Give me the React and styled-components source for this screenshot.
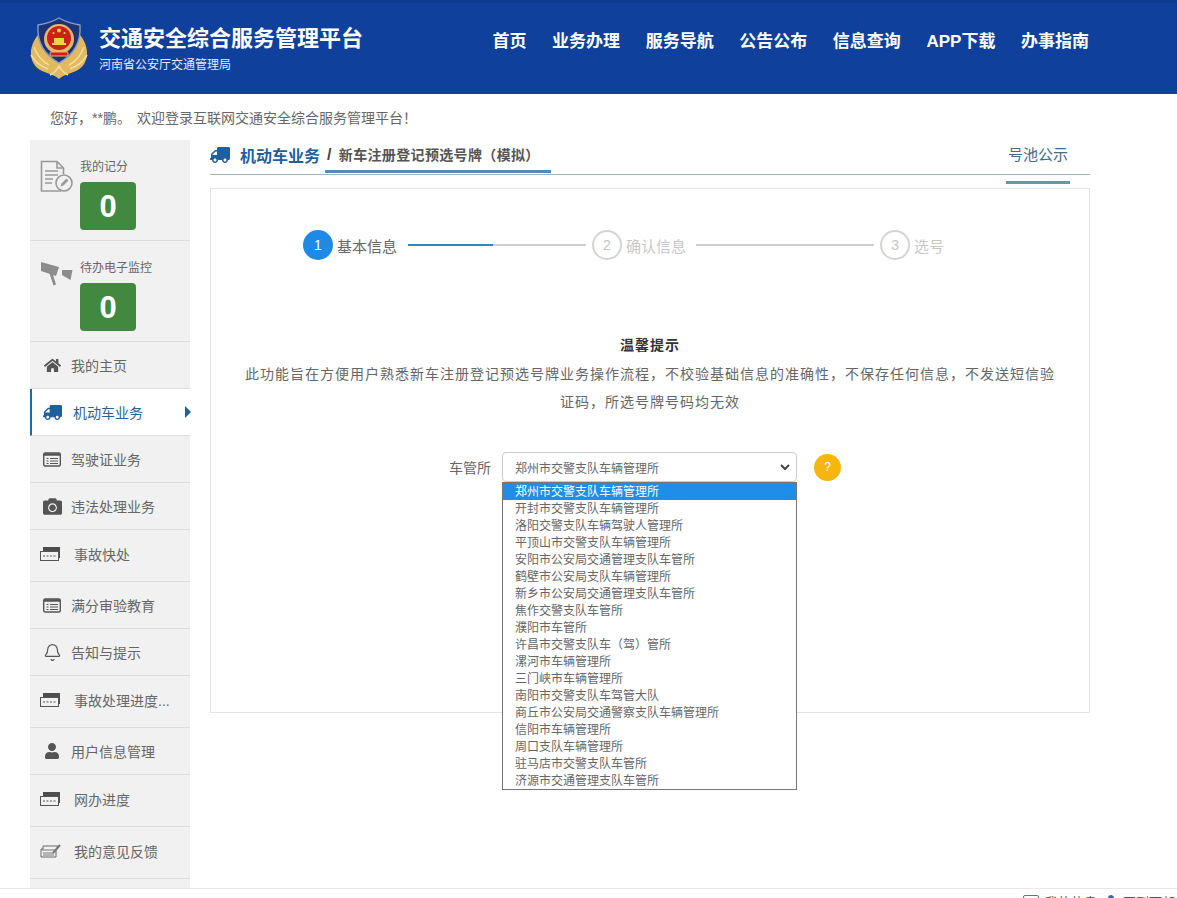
import React from 'react'
import styled, { createGlobalStyle } from 'styled-components'
import { FaTruck, FaHome, FaCamera, FaUser } from 'react-icons/fa'
import { Bell } from 'lucide-react'

const GlobalStyle = createGlobalStyle`
  html, body {
    margin: 0;
    padding: 0;
    height: 100%;
    overflow: hidden;
    background: #fff;
    font-family: "Liberation Sans", "Noto Sans CJK SC", sans-serif;
    color: #666;
  }
`
const Header = styled.header`
  height: 91px;
  background: #0e409c;
  border-top: 3px solid #0b3a8f;
`
const HeaderInner = styled.div`
  width: 1090px;
  height: 100%;
  padding-left: 30px;
  box-sizing: border-box;
  display: flex;
  align-items: center;
  justify-content: space-between;
`
const Brand = styled.div`
  display: flex;
  align-items: center;
  gap: 11px;
  margin-top: -2px;
`
const BrandText = styled.div`
  display: flex;
  flex-direction: column;
  gap: 3px;
  padding-top: 2px;
  color: #fff;
`
const BrandTitle = styled.div`
  font-size: 22px;
  line-height: 30px;
  font-weight: 700;
`
const BrandSub = styled.div`
  font-size: 12px;
  line-height: 16px;
  color: #e4ecf8;
`
const Nav = styled.nav`
  display: flex;
  gap: 25.6px;
  margin: -18px 1px 0 0;
`
const NavLink = styled.a`
  color: #fff;
  font-size: 17px;
  font-weight: 700;
`
const Welcome = styled.div`
  height: 46px;
  padding-left: 50px;
  display: flex;
  align-items: center;
  gap: 6px;
  font-size: 14px;
  color: #666;
`
const Layout = styled.div`
  display: flex;
  gap: 20px;
  padding-left: 30px;
  width: 1090px;
  box-sizing: border-box;
`
const Sidebar = styled.aside`
  width: 160px;
  flex: none;
  height: 760px;
  background: #f1f1f1;
`
const ScoreItem = styled.div`
  height: 100px;
  border-bottom: 1px solid #ddd;
  display: flex;
  padding-left: 10px;
`
const ScoreIcon = styled.div`
  width: 40px;
  padding-top: ${p => p.$top}px;
`
const ScoreBody = styled.div`
  padding-top: 18px;
  font-size: 12px;
  line-height: 18px;
  color: #666;
`
const ScoreBox = styled.div`
  width: 56px;
  height: 48px;
  box-sizing: border-box;
  padding-top: 2px;
  margin-top: 6px;
  border-radius: 4px;
  background: #43883f;
  color: #fff;
  font-size: 31px;
  font-weight: 700;
  display: flex;
  align-items: center;
  justify-content: center;
`
const MenuItem = styled.div`
  box-sizing: border-box;
  padding-bottom: ${p => (p.$tall ? 4 : 0)}px;
  height: ${p => (p.$tall ? 52 : 47)}px;
  border-bottom: 1px solid #ddd;
  display: flex;
  align-items: center;
  padding-left: ${p => (p.$active ? 8 : 10)}px;
  font-size: 14px;
  position: relative;
  background: ${p => (p.$active ? '#fff' : 'transparent')};
  border-left: ${p => (p.$active ? '2px solid #1f6aa5' : 'none')};
  color: ${p => (p.$active ? '#2b6390' : '#666')};
`
const MenuIcon = styled.span`
  width: 24px;
  margin-right: ${p => p.$gap}px;
  display: flex;
  justify-content: ${p => (p.$left ? 'flex-start' : 'center')};
  color: ${p => (p.$active ? '#1f5f9e' : '#555')};
  font-size: ${p => p.$size}px;
`
const ActiveArrow = styled.span`
  position: absolute;
  right: -1px;
  top: 17px;
  border-left: 6px solid #1f5f9e;
  border-top: 6px solid transparent;
  border-bottom: 6px solid transparent;
`
const Main = styled.main`
  width: 880px;
  flex: none;
`
const TitleBar = styled.div`
  height: 34px;
  border-bottom: 1px solid #9db5c0;
  display: flex;
  justify-content: space-between;
`
const Crumbs = styled.div`
  display: flex;
  align-items: flex-start;
`
const CrumbRoot = styled.div`
  display: flex;
  align-items: center;
  gap: 10px;
  height: 30px;
  color: #1f5f9e;
  font-size: 16px;
  font-weight: 700;
  margin-right: 5px;
  svg { transform: scaleX(-1); }
`
const CrumbCurrent = styled.div`
  height: 33px;
  width: 226px;
  box-sizing: border-box;
  padding-bottom: 3px;
  border-bottom: 3px solid #5b86b5;
  display: flex;
  align-items: center;
  font-size: 14px;
  letter-spacing: 0.35px;
  font-weight: 700;
  color: #555;
  white-space: nowrap;
`
const CrumbSlash = styled.span`
  font-size: 16px;
  padding-top: 3px;
  margin: 0 7px 0 2px;
  color: #444;
`
const PoolTab = styled.div`
  position: relative;
  width: 64px;
  margin-right: 20px;
  height: 30px;
  line-height: 30px;
  text-align: center;
  font-size: 15px;
  color: #4a6b85;
  &::after {
    content: '';
    position: absolute;
    left: 0;
    right: 0;
    top: 41px;
    height: 3px;
    background: #6b93a8;
  }
`
const Card = styled.section`
  margin-top: 13px;
  height: 523px;
  border: 1px solid #e4e4e4;
  position: relative;
`
const Steps = styled.div`
  display: flex;
  align-items: center;
  padding: 41px 0 0 92px;
`
const StepCircle = styled.div`
  width: 30px;
  height: 30px;
  box-sizing: border-box;
  border-radius: 50%;
  flex: none;
  display: flex;
  align-items: center;
  justify-content: center;
  font-size: 14px;
  background: ${p => (p.$on ? '#1e8ae6' : '#fff')};
  border: ${p => (p.$on ? 'none' : '2px solid #d4d4d4')};
  color: ${p => (p.$on ? '#fff' : '#c4c4c4')};
`
const StepLabel = styled.div`
  font-size: 15px;
  margin-left: 4px;
  white-space: nowrap;
  color: ${p => (p.$on ? '#666' : '#c8c8c8')};
`
const StepLine = styled.div`
  width: 178px;
  height: 2px;
  margin: 0 6px 0 ${p => p.$left}px;
  background: #cfcfcf;
  display: flex;
`
const StepProgress = styled.div`
  height: 100%;
  background: #2b86c5;
`
const Notice = styled.div`
  margin-top: 71px;
  padding: 0 34px;
  text-align: center;
  font-size: 14px;
  line-height: 28px;
  letter-spacing: 1px;
  color: #666;
`
const NoticeTitle = styled.div`
  font-weight: 700;
  color: #333;
  margin-bottom: 1px;
`
const FormRow = styled.div`
  display: flex;
  align-items: center;
  margin-top: 36px;
  padding-left: 238px;
`
const FieldLabel = styled.label`
  font-size: 14px;
  width: 43px;
  margin-right: 10px;
  color: #666;
  white-space: nowrap;
`
const SelectWrap = styled.div`
  position: relative;
  width: 295px;
  height: 30px;
`
const SelectBox = styled.div`
  height: 100%;
  box-sizing: border-box;
  border: 1px solid #ccc;
  border-radius: 4px;
  padding: 0 6px 0 12px;
  display: flex;
  align-items: center;
  justify-content: space-between;
  font-size: 12px;
  color: #666;
`
const Listbox = styled.ul`
  position: absolute;
  left: 0;
  top: 30px;
  width: 100%;
  box-sizing: border-box;
  margin: 0;
  padding: 0;
  list-style: none;
  border: 1px solid #767676;
  background: #fff;
  z-index: 2;
`
const Option = styled.li`
  height: 17px;
  line-height: 19px;
  padding-left: 12px;
  font-size: 12px;
  white-space: nowrap;
  background: ${p => (p.$selected ? '#1e8ee8' : '#fff')};
  color: ${p => (p.$selected ? '#fff' : '#666')};
`
const HelpDot = styled.div`
  width: 27px;
  height: 27px;
  margin-left: 17px;
  border-radius: 50%;
  background: #f6b60e;
  color: #fff;
  font-size: 12px;
  display: flex;
  align-items: center;
  justify-content: center;
`
const Footer = styled.footer`
  position: fixed;
  left: 0;
  right: 0;
  bottom: 0;
  height: 9px;
  border-top: 1px solid #e8e8e8;
  background: #fff;
  overflow: hidden;
  z-index: 3;
  display: flex;
  justify-content: flex-end;
`
const FooterLink = styled.div`
  display: flex;
  align-items: flex-start;
  gap: 6px;
  padding-top: 6px;
  font-size: 13px;
  line-height: 15px;
  color: #555;
  white-space: nowrap;
  width: ${p => p.$width}px;
`
const FooterBoxIcon = styled.span`
  width: 14px;
  height: 12px;
  border: 1px solid #3b8a6a;
  border-radius: 2px;
  flex: none;
`

const Emblem = () => (
  <svg width="58" height="62" viewBox="0 0 58 62">
    <path d="M8 18C-2 30-2 47 12 54c7 3 13 4 17 8 4-4 10-5 17-8 14-7 14-24 4-36z" fill="#e2b95f" />
    <path d="M4 30c3 8 7 14 15 18M1 38c4 7 9 11 17 14M54 30c-3 8-7 14-15 18M57 38c-4 7-9 11-17 14M20 58c4-2 7-5 9-9 2 4 5 7 9 9" stroke="#f5dd9e" strokeWidth="1.6" fill="none" />
    <path d="M29 1C22 5 15 7 8 8 7 22 11 36 29 46 47 36 51 22 50 8 43 7 36 5 29 1z" fill="#1c3477" stroke="#8a9cc2" strokeWidth="1.4" />
    <circle cx="29" cy="22" r="15" fill="#e8b868" />
    <circle cx="29" cy="21" r="12" fill="#cf1f1c" />
    <circle cx="29" cy="13.5" r="2" fill="#f6d04d" />
    <circle cx="23.5" cy="16" r="1.1" fill="#f6d04d" />
    <circle cx="34.5" cy="16" r="1.1" fill="#f6d04d" />
    <path d="M22 26h14v2H22zM24 21h10v5H24z" fill="#f6d04d" />
    <rect x="20" y="35" width="18" height="4" rx="1" fill="#cf1f1c" stroke="#e8b868" />
  </svg>
)

const ScoreDocIcon = () => (
  <svg width="33" height="33" viewBox="0 0 33 33" fill="none" stroke="#999" strokeWidth="1.6">
    <path d="M21 31H1.5V1.5H17L23.5 8V14" />
    <path d="M17 1.5V8H23.5" />
    <path d="M5 11h13M5 15h13M5 19h8M5 23h7" />
    <circle cx="24" cy="23" r="8" fill="#f1f1f1" />
    <path d="M20.5 26.5l1-3 5-5 2 2-5 5z" fill="#999" stroke="none" />
  </svg>
)

const CameraIcon = () => (
  <svg width="33" height="28" viewBox="0 0 33 28" fill="#8c8c8c">
    <path d="M1 4l18 5-3 9-15-5z" />
    <path d="M8 11l3-1 5 16.5-2.5 1z" />
    <path d="M22 12h10.5l-2 10-8.5-5z" />
  </svg>
)

const TicketIcon = () => (
  <svg width="21" height="14" viewBox="0 0 21 14">
    <path d="M3 0h17v11h-1.5V4.5H3z" fill="#4d4d4d" />
    <rect x="0.5" y="4.5" width="18" height="9" fill="#f1f1f1" stroke="#555" />
    <path d="M3 9h13" stroke="#555" strokeDasharray="2 1.5" />
  </svg>
)

const ListIcon = () => (
  <svg width="18" height="15" viewBox="0 0 18 15" fill="none" stroke="#555">
    <rect x="0.7" y="1" width="16.6" height="13" rx="1.5" strokeWidth="1.4" />
    <path d="M1 2.5h16" strokeWidth="2.5" />
    <path d="M3.5 6.5h2M3.5 9h2M3.5 11.5h2M7 6.5h8M7 9h8M7 11.5h8" />
  </svg>
)

const FeedbackIcon = () => (
  <svg width="21" height="14" viewBox="0 0 21 14">
    <path d="M3 2h15l-2 4v7H1V5h2z" fill="none" stroke="#666" />
    <path d="M2 6h13M3 9h11M3 11h11" stroke="#777" />
    <path d="M13 9l7-8" stroke="#777" strokeWidth="2" />
  </svg>
)

const menus = [
  { name: '我的主页', icon: <FaHome /> },
  { name: '机动车业务', icon: <FaTruck style={{ transform: 'scaleX(-1)' }} />, active: true, gap: 9, size: 19 },
  { name: '驾驶证业务', icon: <ListIcon /> },
  { name: '违法处理业务', icon: <FaCamera />, size: 19 },
  { name: '事故快处', icon: <TicketIcon />, tall: true, left: true, gap: 10 },
  { name: '满分审验教育', icon: <ListIcon /> },
  { name: '告知与提示', icon: <Bell size={19} strokeWidth={1.5} /> },
  { name: '事故处理进度...', icon: <TicketIcon />, tall: true, left: true, gap: 10 },
  { name: '用户信息管理', icon: <FaUser />, size: 16 },
  { name: '网办进度', icon: <TicketIcon />, tall: true, left: true, gap: 10 },
  { name: '我的意见反馈', icon: <FeedbackIcon />, tall: true, left: true, gap: 10 },
]

const navs = ['首页', '业务办理', '服务导航', '公告公布', '信息查询', 'APP下载', '办事指南']

const stations = [
  '郑州市交警支队车辆管理所',
  '开封市交警支队车辆管理所',
  '洛阳交警支队车辆驾驶人管理所',
  '平顶山市交警支队车辆管理所',
  '安阳市公安局交通管理支队车管所',
  '鹤壁市公安局支队车辆管理所',
  '新乡市公安局交通管理支队车管所',
  '焦作交警支队车管所',
  '濮阳市车管所',
  '许昌市交警支队车（驾）管所',
  '漯河市车辆管理所',
  '三门峡市车辆管理所',
  '南阳市交警支队车驾管大队',
  '商丘市公安局交通警察支队车辆管理所',
  '信阳市车辆管理所',
  '周口支队车辆管理所',
  '驻马店市交警支队车管所',
  '济源市交通管理支队车管所',
]

const App = () => {
  return (
    <>
      <GlobalStyle />
      <Header>
        <HeaderInner>
          <Brand>
            <Emblem />
            <BrandText>
              <BrandTitle>交通安全综合服务管理平台</BrandTitle>
              <BrandSub>河南省公安厅交通管理局</BrandSub>
            </BrandText>
          </Brand>
          <Nav>
            {navs.map(item => (
              <NavLink key={item}>{item}</NavLink>
            ))}
          </Nav>
        </HeaderInner>
      </Header>
      <Welcome>
        <span>您好，**鹏。</span>
        <span>欢迎登录互联网交通安全综合服务管理平台！</span>
      </Welcome>
      <Layout>
        <Sidebar>
          <ScoreItem>
            <ScoreIcon $top={20}><ScoreDocIcon /></ScoreIcon>
            <ScoreBody>
              我的记分
              <ScoreBox>0</ScoreBox>
            </ScoreBody>
          </ScoreItem>
          <ScoreItem>
            <ScoreIcon $top={17}><CameraIcon /></ScoreIcon>
            <ScoreBody>
              待办电子监控
              <ScoreBox>0</ScoreBox>
            </ScoreBody>
          </ScoreItem>
          {menus.map(item => (
            <MenuItem key={item.name} $tall={item.tall} $active={item.active}>
              <MenuIcon $gap={item.gap || 7} $left={item.left} $active={item.active} $size={item.size || 17}>
                {item.icon}
              </MenuIcon>
              {item.name}
              {item.active && <ActiveArrow />}
            </MenuItem>
          ))}
        </Sidebar>
        <Main>
          <TitleBar>
            <Crumbs>
              <CrumbRoot>
                <FaTruck size={20} />
                机动车业务
              </CrumbRoot>
              <CrumbCurrent>
                <CrumbSlash>/</CrumbSlash>
                新车注册登记预选号牌（模拟）
              </CrumbCurrent>
            </Crumbs>
            <PoolTab>号池公示</PoolTab>
          </TitleBar>
          <Card>
            <Steps>
              <StepCircle $on>1</StepCircle>
              <StepLabel $on>基本信息</StepLabel>
              <StepLine $left={11}>
                <StepProgress style={{ width: '48%' }} />
              </StepLine>
              <StepCircle>2</StepCircle>
              <StepLabel>确认信息</StepLabel>
              <StepLine $left={10} />
              <StepCircle>3</StepCircle>
              <StepLabel>选号</StepLabel>
            </Steps>
            <Notice>
              <NoticeTitle>温馨提示</NoticeTitle>
              此功能旨在方便用户熟悉新车注册登记预选号牌业务操作流程，不校验基础信息的准确性，不保存任何信息，不发送短信验证码，所选号牌号码均无效
            </Notice>
            <FormRow>
              <FieldLabel>车管所</FieldLabel>
              <SelectWrap>
                <SelectBox>
                  {stations[0]}
                  <svg width="10" height="7" viewBox="0 0 10 7" fill="none" stroke="#444" strokeWidth="2">
                    <path d="M1 1l4 4 4-4" />
                  </svg>
                </SelectBox>
                <Listbox>
                  {stations.map((item, idx) => (
                    <Option key={item} $selected={idx === 0}>{item}</Option>
                  ))}
                </Listbox>
              </SelectWrap>
              <HelpDot>?</HelpDot>
            </FormRow>
          </Card>
        </Main>
      </Layout>
      <Footer>
        <FooterLink $width={82}>
          <FooterBoxIcon />
          我的信息
        </FooterLink>
        <FooterLink $width={72}>
          <FaUser size={12} color="#2b6cb0" />
          回到顶部
        </FooterLink>
      </Footer>
    </>
  )
}

export default App
